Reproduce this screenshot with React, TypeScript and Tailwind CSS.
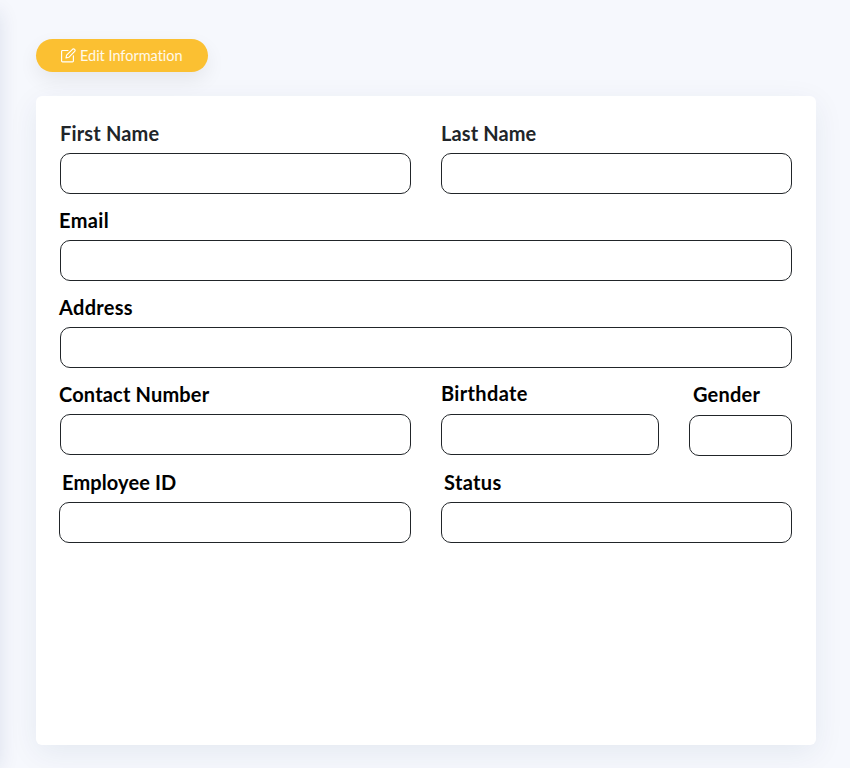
type FieldProps = {
  label: string;
  id: string;
  className?: string;
  labelClass?: string;
};

function Field({ label, id, className = '', labelClass = 'text-black' }: FieldProps) {
  return (
    <div className={`flex flex-col ${className}`}>
      <label
        htmlFor={id}
        className={`h-[33px] whitespace-nowrap text-[20px] leading-[26px] font-bold ${labelClass}`}
      >
        {label}
      </label>
      <input
        id={id}
        className="h-[41px] w-full rounded-[10px] border border-[#212529] bg-white px-3 text-base outline-none"
      />
    </div>
  );
}

function EditIcon() {
  return (
    <svg
      viewBox="0 0 15 15"
      className="size-[15px] shrink-0"
      fill="none"
      stroke="currentColor"
      strokeWidth="1.15"
      strokeLinecap="round"
      strokeLinejoin="round"
    >
      <path d="M7 2.5H1.5Q.6 2.5 .6 3.4V13Q.6 13.9 1.5 13.9H11.5Q12.4 13.9 12.4 13V7.8" />
      <path d="M5 10 5.6 7.2 11.5 1.3Q12.6 .3 13.6 1.3T13.7 3.4L7.8 9.3Z" />
    </svg>
  );
}

export default function App() {
  return (
    <div className="flex h-[768px] w-[850px] overflow-hidden bg-[#f6f8fd] font-['Lato',sans-serif]">
      <aside className="-ml-10 mt-3 w-10 shrink-0 shadow-[0_0_20px_rgba(20,40,100,0.11)]" />
      <main className="flex flex-col pl-9 pt-[39px]">
        <button className="flex h-[33px] w-[172px] shrink-0 items-center rounded-full bg-[#fbc032] pl-[25px] text-white shadow-[0_8px_20px_rgba(0,0,0,0.07)]">
          <EditIcon />
          <span className="ml-1 whitespace-nowrap text-[14.5px] leading-5 font-normal tracking-[-0.02px] text-white/90">
            Edit Information
          </span>
        </button>
        <form className="mt-6 flex h-[649px] w-[780px] shrink-0 flex-col gap-[13px] rounded-[6px] bg-white px-6 pt-6 shadow-[0_8px_30px_rgba(20,50,100,0.075)]">
          <div className="flex gap-[30px]">
            <Field id="first-name" label="First Name" className="w-[351px]" labelClass="tracking-[0.17px] text-[#212529]" />
            <Field id="last-name" label="Last Name" className="w-[351px]" labelClass="tracking-[0.1px] text-[#212529]" />
          </div>
          <Field id="email" label="Email" labelClass="-ml-px tracking-[0.35px] text-black" />
          <Field id="address" label="Address" labelClass="-ml-px tracking-[0.3px] text-black" />
          <div className="flex h-[75px] gap-[30px]">
            <Field id="contact" label="Contact Number" className="w-[351px]" labelClass="-ml-px tracking-[0.17px] text-black" />
            <Field id="birthdate" label="Birthdate" className="w-[218px]" labelClass="-mt-px mb-px tracking-[0.35px] text-black" />
            <Field id="gender" label="Gender" className="w-[103px]" labelClass="mb-px pl-1 tracking-[0.2px] text-black" />
          </div>
          <div className="flex gap-[30px]">
            <Field id="employee-id" label="Employee ID" className="-ml-px w-[352px]" labelClass="pl-[3px] tracking-[0.12px] text-black" />
            <Field id="status" label="Status" className="w-[351px]" labelClass="pl-[3px] tracking-[0.35px] text-black" />
          </div>
        </form>
      </main>
    </div>
  );
}
